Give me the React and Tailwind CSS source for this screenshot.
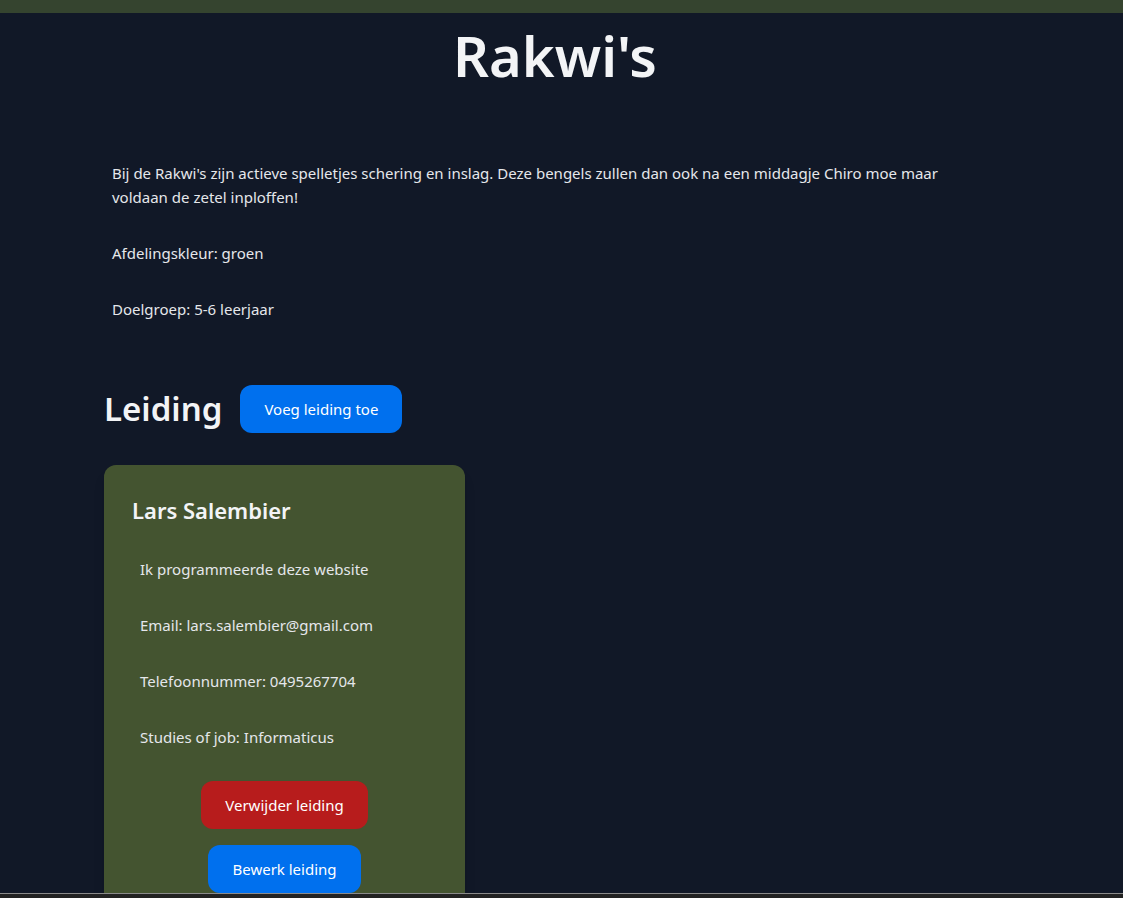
import React from 'react';

const leiding = [
    {
        naam: 'Lars Salembier',
        beschrijving: 'Ik programmeerde deze website',
        email: 'lars.salembier@gmail.com',
        telefoon: '0495267704',
        job: 'Informaticus',
    },
];

export default function App() {
    return (
        <div className="min-h-screen bg-[#111827] text-[#e5e7eb] font-['Noto_Sans',sans-serif]">
            <div className="h-[13px] bg-[#35442f]" />
            <div className="pr-[13px]">
                <h1 className="mt-[6px] text-center text-[56px] leading-[72px] font-semibold text-[#f3f4f6]">Rakwi's</h1>
            </div>

            <main className="px-[104px] pt-[70px]">
                <section className="pl-2 max-w-[880px] text-[15px] leading-6">
                    <p>
                        Bij de Rakwi's zijn actieve spelletjes schering en inslag. Deze bengels zullen dan ook na een middagje Chiro moe maar voldaan de zetel inploffen!
                    </p>
                    <p className="mt-8">Afdelingskleur: groen</p>
                    <p className="mt-8">Doelgroep: 5-6 leerjaar</p>
                </section>

                <div className="mt-[64px] flex items-center gap-[18px]">
                    <h2 className="text-[33px] leading-10 font-semibold text-[#f3f4f6]">Leiding</h2>
                    <button className="rounded-xl bg-[#0070ee] px-6 py-3 text-[15px] leading-6 text-white">
                        Voeg leiding toe
                    </button>
                </div>

                <div className="mt-8 flex gap-6">
                    {leiding.map((l) => (
                        <div key={l.email} className="w-[361px] rounded-xl bg-[#445430] p-7 pb-8 shadow-lg">
                            <h3 className="mt-[1px] text-[22px] leading-8 font-semibold text-[#f3f4f6]">{l.naam}</h3>
                            <div className="mt-[31px] flex flex-col gap-8 pl-2 text-[15px] leading-6">
                                <p>{l.beschrijving}</p>
                                <p>Email: {l.email}</p>
                                <p>Telefoonnummer: {l.telefoon}</p>
                                <p>Studies of job: {l.job}</p>
                            </div>
                            <div className="mt-8 flex flex-col items-center gap-4">
                                <button className="rounded-xl bg-[#b71c1c] px-6 py-3 text-[15px] leading-6 text-white">
                                    Verwijder leiding
                                </button>
                                <button className="rounded-xl bg-[#0070ee] px-6 py-3 text-[15px] leading-6 text-white">
                                    Bewerk leiding
                                </button>
                            </div>
                        </div>
                    ))}
                </div>
            </main>

            <div className="fixed inset-x-0 bottom-0 h-[5px] border-t border-[#8a8a8a] bg-[#222222]" />
        </div>
    );
}
